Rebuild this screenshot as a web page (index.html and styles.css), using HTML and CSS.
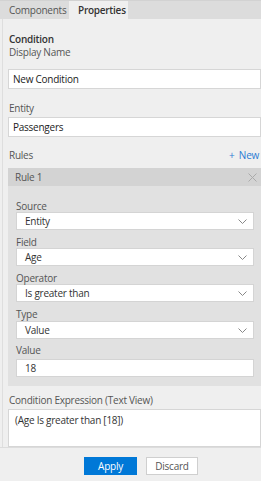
FILE: index.html
```html
<html>
	<head>
		<title>Condition Properties</title>
		<link rel="stylesheet" href="styles.css">
	</head>
	<body>
		<div class="panel">
			<nav class="tabs">
				<a href="#" class="tab">Components</a>
				<a href="#" class="tab active">Properties</a>
			</nav>
			<div class="content">
				<h3>Condition</h3>
				<label class="lbl">Display Name</label>
				<div class="input first">New Condition</div>
				<label class="lbl entity">Entity</label>
				<div class="input second">Passengers</div>

				<div class="rules-head">
					<span>Rules</span>
					<a href="#" class="new">+ New</a>
				</div>
				<div class="rule">
					<div class="rule-title">
						<span>Rule 1</span>
						<svg class="close" width="9" height="9" viewBox="0 0 9 9"><path d="M0.5 0.5L8.5 8.5M8.5 0.5L0.5 8.5" stroke="#aaa" stroke-width="1"/></svg>
					</div>
					<div class="rule-body">
						<label class="sub">Source</label>
						<div class="select">Entity<svg class="chev" width="9" height="5" viewBox="0 0 9 5"><path d="M0.5 0.5L4.5 4.5L8.5 0.5" fill="none" stroke="#888"/></svg></div>
						<label class="sub">Field</label>
						<div class="select">Age<svg class="chev" width="9" height="5" viewBox="0 0 9 5"><path d="M0.5 0.5L4.5 4.5L8.5 0.5" fill="none" stroke="#888"/></svg></div>
						<label class="sub">Operator</label>
						<div class="select">Is greater than<svg class="chev" width="9" height="5" viewBox="0 0 9 5"><path d="M0.5 0.5L4.5 4.5L8.5 0.5" fill="none" stroke="#888"/></svg></div>
						<label class="sub">Type</label>
						<div class="select type">Value<svg class="chev" width="9" height="5" viewBox="0 0 9 5"><path d="M0.5 0.5L4.5 4.5L8.5 0.5" fill="none" stroke="#888"/></svg></div>
						<label class="sub">Value</label>
						<div class="select value">18</div>
					</div>
				</div>

				<label class="sub expr">Condition Expression (Text View)</label>
				<div class="textarea">(Age Is greater than [18])</div>
			</div>
			<div class="footer">
				<button class="btn apply">Apply</button>
				<button class="btn discard">Discard</button>
			</div>
		</div>
	</body>
</html>
```

FILE: styles.css
```css
body {
	margin: 0px;
	padding: 0px;
	font-family: "Open Sans", "Noto Sans", sans-serif;
	font-size: 10px;
	letter-spacing: -0.25px;
	background: #efefef;
	color: #444;
}

.panel {
	width: 261px;
	height: 481px;
	display: flex;
	flex-direction: column;
	overflow: hidden;
}

.tabs {
	display: flex;
	height: 19px;
	background: #dcdcdc;
	border-top: 1px solid #d2d2d2;
	box-sizing: border-box;
}

.tab {
	display: block;
	width: 69px;
	box-sizing: border-box;
	line-height: 18px;
	padding-left: 9px;
	text-decoration: none;
	color: #555;
}

.tab.active {
	width: 59px;
	background: #efefef;
	color: #333;
	font-weight: 600;
}

.content {
	flex: 1;
	margin-left: 2px;
	border-left: 1px solid #dedede;
	padding-left: 5px;
	display: flex;
	flex-direction: column;
}

h3 {
	margin: 14px 0 0 1px;
	font-size: 10px;
	font-weight: 600;
	color: #333;
	line-height: 13px;
}

.lbl {
	display: block;
	line-height: 13px;
	margin-left: 1px;
	color: #555;
}

.input {
	height: 20px;
	box-sizing: border-box;
	border: 1px solid #d6d6d6;
	background: #fff;
	padding-left: 4px;
	line-height: 18px;
	color: #222;
	width: 253px;
}

.input.first {
	margin-top: 10px;
}

.lbl.entity {
	margin-top: 13px;
}

.input.second {
	margin-top: 2px;
}

.rules-head {
	display: flex;
	justify-content: space-between;
	margin-top: 12px;
	line-height: 13px;
	margin-left: 1px;
	color: #555;
}

.new {
	color: #2b7cd3;
	text-decoration: none;
	margin-right: 2px;
	word-spacing: 2px;
}

.rule {
	margin-top: 6px;
	width: 253px;
}

.rule-title {
	height: 18px;
	background: #d3d3d3;
	display: flex;
	align-items: center;
	justify-content: space-between;
	padding: 0 4px 0 7px;
	color: #555;
}

.close {
	display: block;
}

.rule-body {
	background: #e1e1e1;
	padding: 14px 7px 9px 8px;
}

.sub {
	display: block;
	line-height: 12px;
	color: #555;
}

.select {
	height: 18px;
	box-sizing: border-box;
	border: 1px solid #d4d4d4;
	background: #fff;
	padding-left: 8px;
	padding-right: 6px;
	line-height: 16px;
	color: #333;
	display: flex;
	align-items: center;
	justify-content: space-between;
	margin-bottom: 6px;
}

.select.type {
	margin-top: 1px;
	margin-bottom: 5px;
}

.select.value {
	margin-top: 3px;
	margin-bottom: 0px;
}

.sub.expr {
	margin-top: 8px;
	margin-left: 1px;
}

.textarea {
	margin-top: 3px;
	height: 38px;
	box-sizing: border-box;
	border: 1px solid #d6d6d6;
	background: #fff;
	padding: 3px 6px;
	line-height: 14px;
	color: #333;
	width: 253px;
}

.footer {
	height: 35px;
	border-top: 1px solid #dcdcdc;
	box-sizing: border-box;
	display: flex;
	justify-content: center;
	align-items: flex-start;
	padding: 9px 0 0 21px;
	gap: 9px;
}

.btn {
	height: 18px;
	font-family: "Open Sans", "Noto Sans", sans-serif;
	font-size: 10px;
	letter-spacing: -0.25px;
	padding: 0;
	border-radius: 0;
}

.apply {
	width: 53px;
	background: #0078d7;
	border: 1px solid #0078d7;
	color: #fff;
}

.discard {
	width: 52px;
	background: #fff;
	border: 1px solid #cfcfcf;
	color: #555;
}
```
